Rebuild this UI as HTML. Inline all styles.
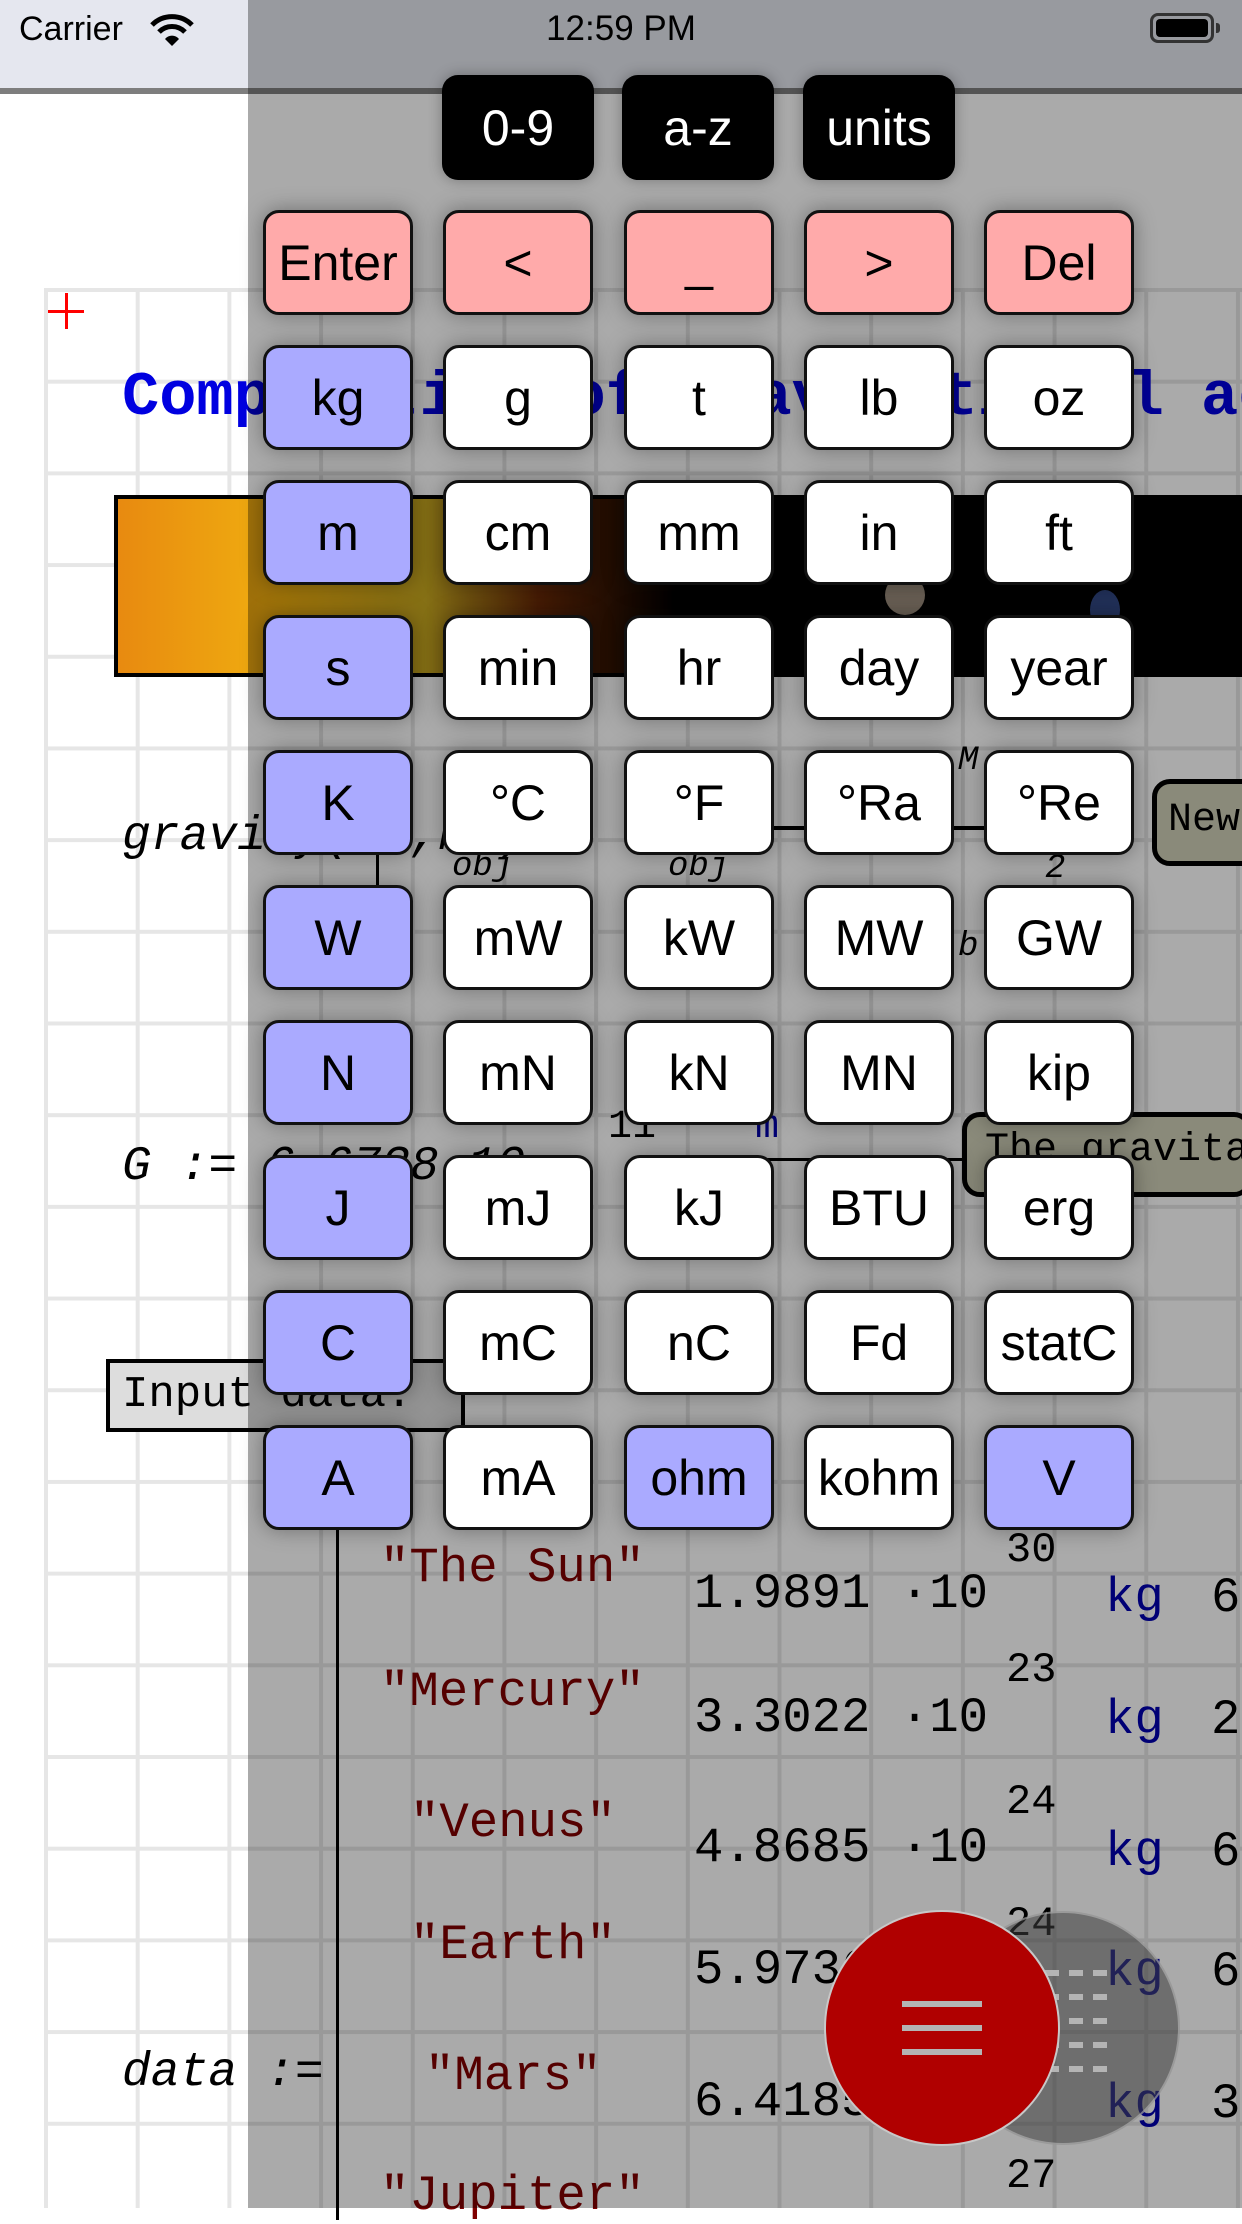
<!DOCTYPE html>
<html><head><meta charset="utf-8"><style>
*{margin:0;padding:0;box-sizing:border-box}
body{width:1242px;height:2208px;position:relative;overflow:hidden;background:#fff;font-family:"Liberation Sans",sans-serif}
.grid{position:absolute;left:44px;top:288px;width:1198px;height:1920px;
background-image:linear-gradient(#e6e6e6 4px,transparent 4px),linear-gradient(90deg,#e6e6e6 4px,transparent 4px);
background-size:91.7px 91.7px;background-position:0 0}
.t{position:absolute;white-space:nowrap;font-family:"Liberation Mono",monospace}
.status{position:absolute;left:0;top:0;width:1242px;height:88px;background:#e5e7ef}
.sline{position:absolute;left:0;top:88px;width:1242px;height:6px;background:#7e7e7e}
.ov{position:absolute;left:248px;top:0;width:994px;height:2208px;background:rgba(0,0,0,0.335)}
.k{position:absolute;width:150px;height:105px;border:3px solid #111;border-radius:16px;font-size:50px;display:flex;align-items:center;justify-content:center;box-shadow:0 0 22px rgba(0,0,0,0.35);color:#000}
.p{background:#ffaaaa}.b{background:#aaaaff}.w{background:#fff}
.tb{position:absolute;top:75px;width:152px;height:105px;background:#000;color:#fff;border-radius:16px;font-size:50px;display:flex;align-items:center;justify-content:center;box-shadow:0 0 14px rgba(0,0,0,0.3)}
.str{color:#800000;font-size:49px}
.num{color:#000;font-size:49px}
.kg{color:#0000b0;font-size:49px}
</style></head><body>
<div class="grid"></div>
<div class="status"></div>
<div class="sline"></div>
<div style="position:absolute;left:48px;top:310px;width:36px;height:3px;background:#f00"></div>
<div style="position:absolute;left:65px;top:293px;width:3px;height:36px;background:#f00"></div>
<div style="position:absolute;left:0;top:350px;width:1242px;height:100px;overflow:hidden"><div class="t" style="left:122px;top:12px;font-size:62px;font-weight:bold;color:#0000e0">Computation of gravitational acceleration</div></div>
<div style="position:absolute;left:114px;top:495px;width:1128px;height:182px;background:#000;border:4px solid #000"></div>
<div style="position:absolute;left:118px;top:499px;width:560px;height:174px;background:linear-gradient(90deg,#e88a10 0%,#f0b010 30%,#c8a820 55%,#6a2a08 75%,#000 100%)"></div>
<div style="position:absolute;left:1090px;top:590px;width:30px;height:40px;border-radius:50%;background:#334a88"></div>
<div style="position:absolute;left:885px;top:575px;width:40px;height:40px;border-radius:50%;background:#a09080"></div>
<div class="t" style="left:122px;top:810px;font-size:48px;font-style:italic">gravity(M  ,M   )</div>
<div class="t" style="left:452px;top:848px;font-size:34px;font-style:italic">obj</div>
<div class="t" style="left:668px;top:848px;font-size:34px;font-style:italic">obj</div>
<div class="t" style="left:958px;top:742px;font-size:34px;font-style:italic">M</div>
<div class="t" style="left:1045px;top:850px;font-size:34px;font-style:italic">2</div>
<div class="t" style="left:958px;top:928px;font-size:34px;font-style:italic">b</div>
<div style="position:absolute;left:376px;top:810px;width:3px;height:80px;background:#000"></div>
<div style="position:absolute;left:700px;top:826px;width:330px;height:4px;background:#000"></div>
<div style="position:absolute;left:1152px;top:779px;width:120px;height:87px;background:#d0d0b8;border:5px solid #000;border-radius:18px"></div>
<div class="t" style="left:1168px;top:798px;font-size:40px">New</div>
<div class="t" style="left:122px;top:1140px;font-size:48px;font-style:italic">G := 6.6738·10</div>
<div class="t" style="left:608px;top:1105px;font-size:40px">11</div>
<div class="t" style="left:755px;top:1105px;font-size:40px;color:#0000b0">m</div>
<div style="position:absolute;left:720px;top:1158px;width:260px;height:3px;background:#000"></div>
<div style="position:absolute;left:962px;top:1112px;width:290px;height:85px;background:#d0d0b8;border:5px solid #000;border-radius:18px"></div>
<div style="position:absolute;left:962px;top:1112px;width:280px;height:85px;overflow:hidden"><div class="t" style="left:23px;top:16px;font-size:40px">The gravitational</div></div>
<div style="position:absolute;left:106px;top:1359px;width:359px;height:73px;background:#ddd;border:4px solid #000"></div>
<div class="t" style="left:122px;top:1370px;font-size:44px">Input data:</div>
<div style="position:absolute;left:336px;top:1520px;width:3px;height:700px;background:#000"></div>
<div class="t" style="left:122px;top:2046px;font-size:48px;font-style:italic">data :=</div>

<div class="t str" style="left:380px;top:1540px">"The Sun"</div>
<div class="t str" style="left:380px;top:1664px">"Mercury"</div>
<div class="t str" style="left:410px;top:1795px">"Venus"</div>
<div class="t str" style="left:410px;top:1917px">"Earth"</div>
<div class="t str" style="left:425px;top:2048px">"Mars"</div>
<div class="t str" style="left:380px;top:2168px">"Jupiter"</div>

<div class="t num" style="left:694px;top:1566px">1.9891 ·10</div>
<div class="t num" style="left:694px;top:1690px">3.3022 ·10</div>
<div class="t num" style="left:694px;top:1820px">4.8685 ·10</div>
<div class="t num" style="left:694px;top:1942px">5.9736 ·10</div>
<div class="t num" style="left:694px;top:2074px">6.4185 ·10</div>
<div class="t num" style="left:1006px;top:1526px;font-size:42px">30</div>
<div class="t num" style="left:1006px;top:1646px;font-size:42px">23</div>
<div class="t num" style="left:1006px;top:1778px;font-size:42px">24</div>
<div class="t num" style="left:1006px;top:1900px;font-size:42px">24</div>
<div class="t num" style="left:1006px;top:2030px;font-size:42px">23</div>
<div class="t num" style="left:1006px;top:2152px;font-size:42px">27</div>
<div class="t kg" style="left:1105px;top:1570px">kg</div><div class="t num" style="left:1211px;top:1570px">6</div>
<div class="t kg" style="left:1105px;top:1692px">kg</div><div class="t num" style="left:1211px;top:1692px">2</div>
<div class="t kg" style="left:1105px;top:1824px">kg</div><div class="t num" style="left:1211px;top:1824px">6</div>
<div class="t kg" style="left:1105px;top:1944px">kg</div><div class="t num" style="left:1211px;top:1944px">6</div>
<div class="t kg" style="left:1105px;top:2076px">kg</div><div class="t num" style="left:1211px;top:2076px">3</div>

<div class="ov"></div>

<div style="position:absolute;left:19px;top:10px;font-size:34px;color:#000">Carrier</div>
<svg style="position:absolute;left:150px;top:14px" width="44" height="32" viewBox="0 0 44 32"><path d="M2 11 A28 28 0 0 1 42 11" stroke="#000" stroke-width="5" fill="none"/><path d="M9 18 A18 18 0 0 1 35 18" stroke="#000" stroke-width="5" fill="none"/><path d="M15 25 A9 9 0 0 1 29 25 L22 32 Z" fill="#000"/></svg>
<div style="position:absolute;left:0;width:1242px;top:9px;text-align:center;font-size:35px;color:#000">12:59 PM</div>
<div style="position:absolute;left:1150px;top:13px;width:64px;height:30px;border:3px solid #333;border-radius:8px;padding:3px"><div style="width:100%;height:100%;background:#000;border-radius:4px"></div></div>
<div style="position:absolute;left:1216px;top:23px;width:4px;height:10px;background:#333;border-radius:0 3px 3px 0"></div>

<div class="tb" style="left:442px">0-9</div>
<div class="tb" style="left:622px">a-z</div>
<div class="tb" style="left:803px">units</div>

<div class="k p" style="left:263px;top:210px">Enter</div>
<div class="k p" style="left:443px;top:210px">&lt;</div>
<div class="k p" style="left:624px;top:210px">_</div>
<div class="k p" style="left:804px;top:210px">&gt;</div>
<div class="k p" style="left:984px;top:210px">Del</div>

<div class="k b" style="left:263px;top:345px">kg</div><div class="k w" style="left:443px;top:345px">g</div><div class="k w" style="left:624px;top:345px">t</div><div class="k w" style="left:804px;top:345px">lb</div><div class="k w" style="left:984px;top:345px">oz</div>
<div class="k b" style="left:263px;top:480px">m</div><div class="k w" style="left:443px;top:480px">cm</div><div class="k w" style="left:624px;top:480px">mm</div><div class="k w" style="left:804px;top:480px">in</div><div class="k w" style="left:984px;top:480px">ft</div>
<div class="k b" style="left:263px;top:615px">s</div><div class="k w" style="left:443px;top:615px">min</div><div class="k w" style="left:624px;top:615px">hr</div><div class="k w" style="left:804px;top:615px">day</div><div class="k w" style="left:984px;top:615px">year</div>
<div class="k b" style="left:263px;top:750px">K</div><div class="k w" style="left:443px;top:750px">°C</div><div class="k w" style="left:624px;top:750px">°F</div><div class="k w" style="left:804px;top:750px">°Ra</div><div class="k w" style="left:984px;top:750px">°Re</div>
<div class="k b" style="left:263px;top:885px">W</div><div class="k w" style="left:443px;top:885px">mW</div><div class="k w" style="left:624px;top:885px">kW</div><div class="k w" style="left:804px;top:885px">MW</div><div class="k w" style="left:984px;top:885px">GW</div>
<div class="k b" style="left:263px;top:1020px">N</div><div class="k w" style="left:443px;top:1020px">mN</div><div class="k w" style="left:624px;top:1020px">kN</div><div class="k w" style="left:804px;top:1020px">MN</div><div class="k w" style="left:984px;top:1020px">kip</div>
<div class="k b" style="left:263px;top:1155px">J</div><div class="k w" style="left:443px;top:1155px">mJ</div><div class="k w" style="left:624px;top:1155px">kJ</div><div class="k w" style="left:804px;top:1155px">BTU</div><div class="k w" style="left:984px;top:1155px">erg</div>
<div class="k b" style="left:263px;top:1290px">C</div><div class="k w" style="left:443px;top:1290px">mC</div><div class="k w" style="left:624px;top:1290px">nC</div><div class="k w" style="left:804px;top:1290px">Fd</div><div class="k w" style="left:984px;top:1290px">statC</div>
<div class="k b" style="left:263px;top:1425px">A</div><div class="k w" style="left:443px;top:1425px">mA</div><div class="k b" style="left:624px;top:1425px">ohm</div><div class="k w" style="left:804px;top:1425px">kohm</div><div class="k b" style="left:984px;top:1425px">V</div>

<div style="position:absolute;left:946px;top:1911px;width:234px;height:234px;border-radius:50%;background:rgba(60,60,60,0.55);border:2px solid rgba(200,200,200,0.5)"></div>
<svg style="position:absolute;left:1045px;top:1970px" width="70" height="130"><g stroke="#b4b4b4" stroke-width="6" stroke-dasharray="14 10"><line x1="0" y1="3" x2="70" y2="3"/><line x1="0" y1="27" x2="70" y2="27"/><line x1="0" y1="51" x2="70" y2="51"/><line x1="0" y1="75" x2="70" y2="75"/><line x1="0" y1="99" x2="70" y2="99"/></g></svg>
<div style="position:absolute;left:824px;top:1910px;width:236px;height:236px;border-radius:50%;background:#b00000;border:2px solid #c8c8c8"></div>
<div style="position:absolute;left:902px;top:2001px;width:80px;height:6px;background:#b4b4b4"></div>
<div style="position:absolute;left:902px;top:2025px;width:80px;height:6px;background:#b4b4b4"></div>
<div style="position:absolute;left:902px;top:2049px;width:80px;height:6px;background:#b4b4b4"></div>
</body></html>
